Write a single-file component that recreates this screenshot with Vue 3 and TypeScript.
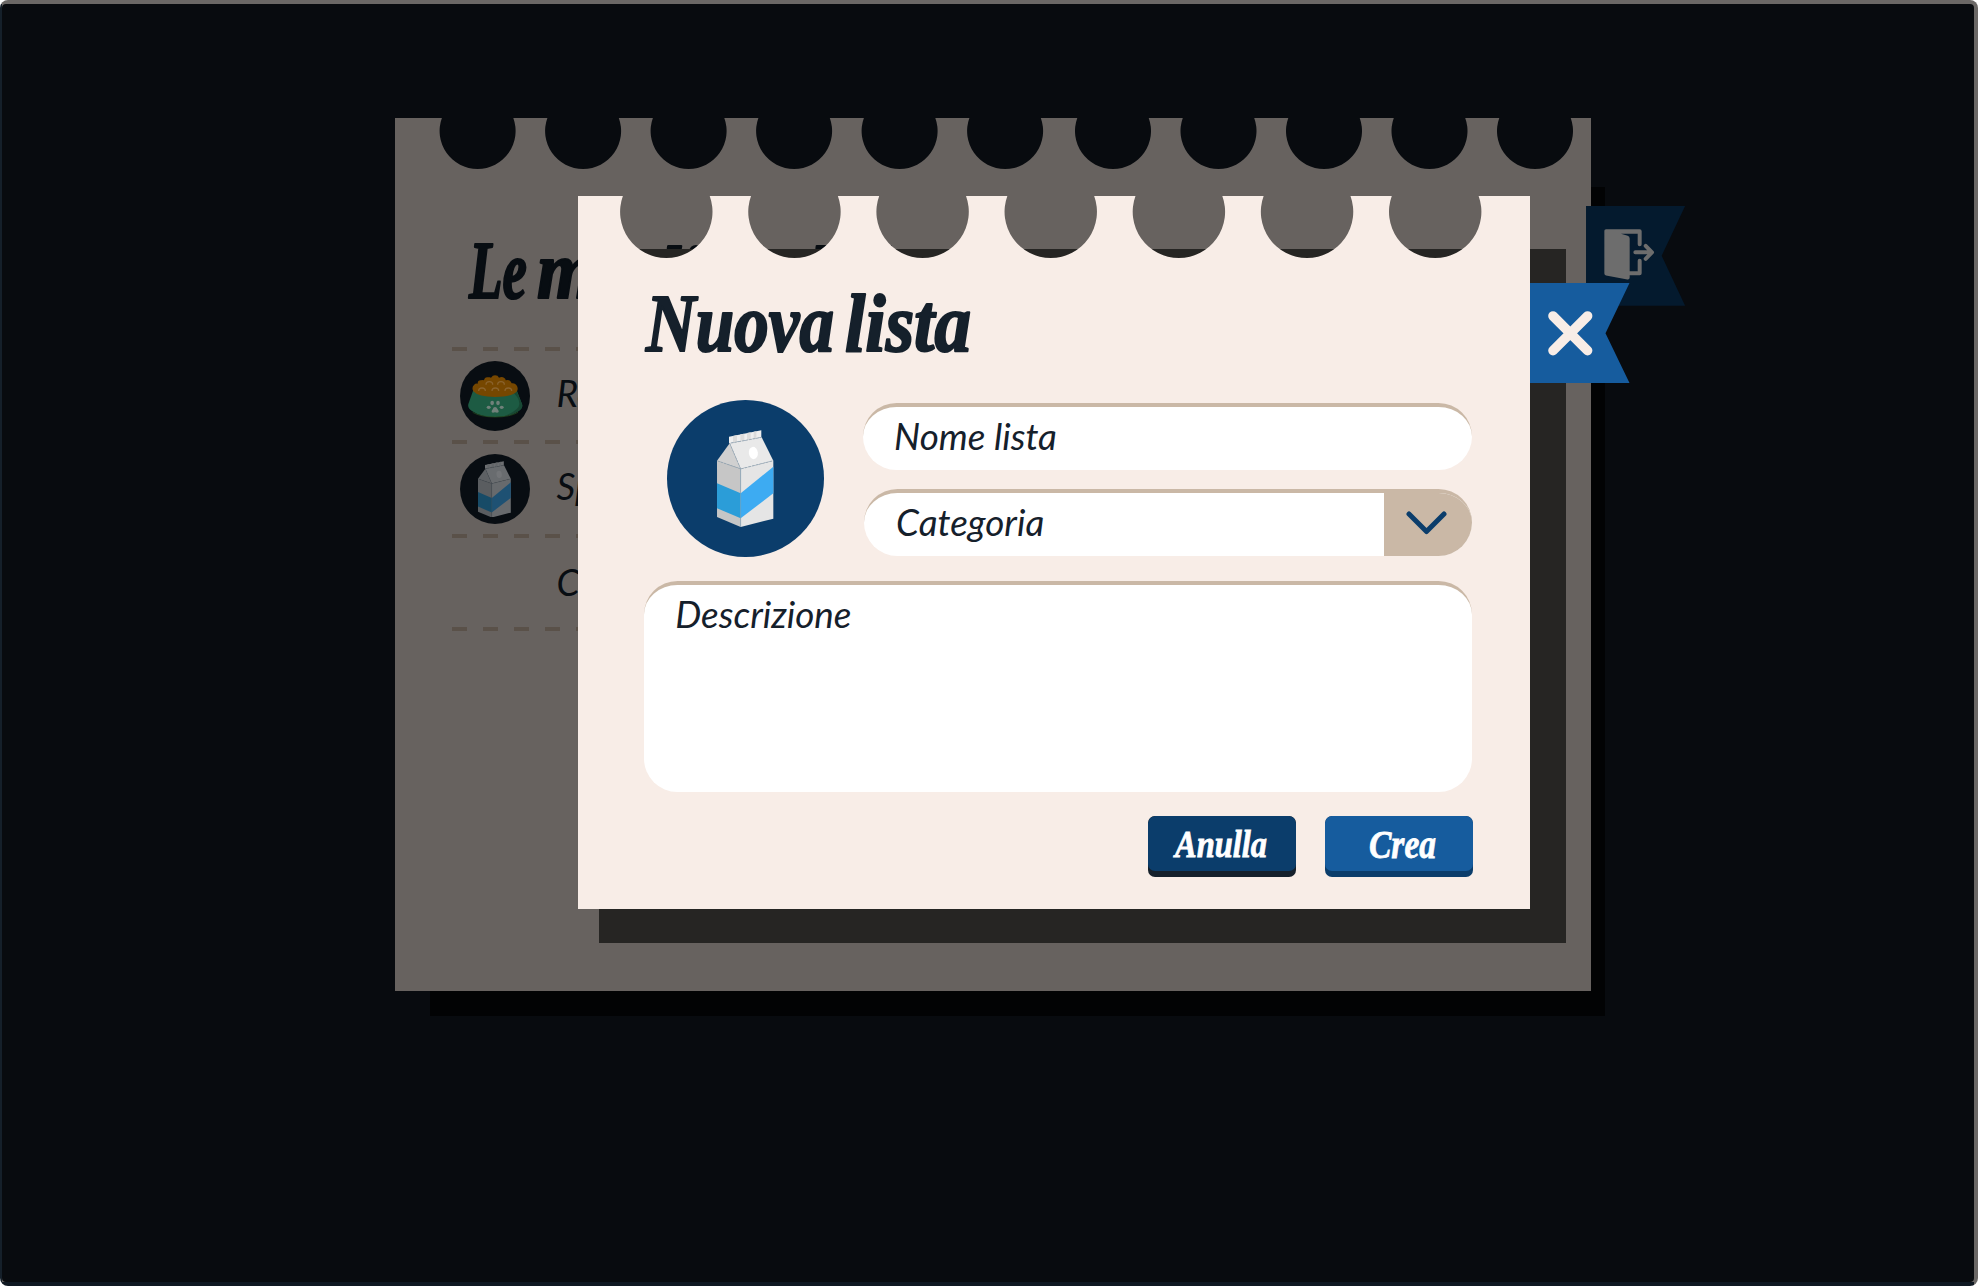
<script setup lang="ts">
interface ListRow {
  label: string
  icon: 'bowl' | 'milk' | null
}

const rows: ListRow[] = [
  { label: 'Roba per cani', icon: 'bowl' },
  { label: 'Spesa', icon: 'milk' },
  { label: 'Crea nuova', icon: null },
]

/** Outline of a sheet of paper whose top edge is bitten by round holes. */
function tornSheet(width: number, height: number, centers: number[], cy: number, r: number): string {
  const half = Math.sqrt(r * r - cy * cy)
  const bites = centers.map((c) => `H${c - half}A${r} ${r} 0 1 0 ${c + half} 0`).join('')
  return `M0 0${bites}H${width}V${height}H0Z`
}

const backHoles = Array.from({ length: 11 }, (_, i) => 82.6 + i * 105.5 + (i > 5 ? 2.4 : 0))
const backPath = tornSheet(1196.2, 873, backHoles, 13, 38)

const modalHoles = Array.from({ length: 7 }, (_, i) => 88.3 + i * 128.15)
const modalPath = tornSheet(952.7, 713.9, modalHoles, 15.8, 46.2)
</script>

<template>
  <div class="window">
    <div class="screen">
      <section class="sheet back">
        <div class="shade back-shade"></div>
        <svg class="paper" width="1196.2" height="873"><path :d="backPath" fill="#67625f" /></svg>
        <svg class="back-title" width="520" height="90">
          <text x="3" y="60" textLength="58" lengthAdjust="spacingAndGlyphs">Le</text>
          <text x="71" y="60" textLength="112" lengthAdjust="spacingAndGlyphs">mie</text>
          <text class="low" x="195" y="60" textLength="122" lengthAdjust="spacingAndGlyphs">liste</text>
          <text class="low" x="332" y="60" textLength="124" lengthAdjust="spacingAndGlyphs">della</text>
        </svg>
        <ul class="rows">
          <li v-for="row in rows" :key="row.label">
            <span class="badge" :class="{ empty: !row.icon }">
              <svg v-if="row.icon === 'bowl'" width="70" height="70" viewBox="88 93 210 210">
                <path d="M128 180L113 222Q110 234 124 243Q150 261 194 261Q238 261 264 243Q278 234 274 222L258 180Z" fill="#1d5b43" />
                <path d="M258 184L274 222Q278 234 264 243Q247 254 222 258Q266 240 266 222Q266 206 250 190Z" fill="#184834" />
                <path d="M126 247Q150 261 194 261Q238 261 262 247" fill="none" stroke="#28511f" stroke-width="2" />
                <path d="M128 184Q122 173 130 165Q134 160 141 161Q141 151 150 151Q158 149 160 151Q162 139 174 142Q179 141 181 143Q186 136 193 136Q202 136 205 143Q214 138 221 144Q225 147 225 151Q238 146 243 160Q252 158 257 165Q264 173 259 184Q244 201 193 201Q143 201 128 184Z" fill="#764700" />
                <g fill="none" stroke="#8a632d" stroke-width="4">
                  <path d="M166 164a10 9 0 0 1 20 0M201 164a10 9 0 0 1 20 0M144 183a10 9 0 0 1 20 0M184 183a10 9 0 0 1 20 0M223 183a10 9 0 0 1 20 0" />
                </g>
                <g fill="#70817a">
                  <ellipse cx="184.500" cy="219" rx="5.500" ry="6.500" />
                  <ellipse cx="202" cy="219" rx="5.500" ry="6.500" />
                  <ellipse cx="174" cy="232" rx="6" ry="5" />
                  <ellipse cx="213" cy="232" rx="6" ry="5" />
                  <path d="M193 231Q198 231 201 238Q205 243 204 246Q201 250 193 247Q185 250 183 246Q182 243 186 238Q188 231 193 231Z" />
                </g>
              </svg>
              <svg v-if="row.icon === 'milk'" class="dim" width="33" height="56.7" viewBox="0 0 170 292">
                <use href="#milk" />
              </svg>
            </span>
            <span class="label">{{ row.label }}</span>
          </li>
        </ul>
        <svg class="exit" width="99.2" height="99.8" viewBox="17 17.500 297.500 299.500">
          <path d="M17 17.500H314.500L244 167L314.500 317H17Z" fill="#041a2e" />
          <path d="M72 92Q72 87 77 87H178Q184 87 184 93V132A6 6 0 0 1 172 132V101H122L142 107Q148 109 148 115V213H172V182A6 6 0 0 1 184 182V219Q184 225 178 225H148V232Q148 239 141 238L77 226Q72 225 72 220Z" fill="#6d6d6d" />
          <path d="M165 156.500H212M196 137L215 156.500L196 176" fill="none" stroke="#6d6d6d" stroke-width="12" stroke-linecap="round" stroke-linejoin="round" />
        </svg>
      </section>

      <section class="sheet modal">
        <div class="shade modal-shade"></div>
        <svg class="paper" width="952.7" height="713.9"><path :d="modalPath" fill="#f8ede7" /></svg>
        <svg class="title" width="360" height="90">
          <text x="2" y="66" textLength="188" lengthAdjust="spacingAndGlyphs">Nuova</text>
          <text x="201" y="66" textLength="126" lengthAdjust="spacingAndGlyphs">lista</text>
        </svg>
        <form class="form" @submit.prevent>
          <div class="top">
            <div class="avatar">
              <svg width="56.7" height="97.3" viewBox="0 0 170 292">
                <g id="milk">
                  <path d="M0 92L71 116V291L0 261Z" fill="#c6c6c6" />
                  <path d="M71 116L169 92V266L71 291Z" fill="#e5e5e5" />
                  <path d="M0 92L38 40L71 116Z" fill="#d0d0d0" />
                  <path d="M38 40L134 22L169 92L71 116Z" fill="#e9e9e9" />
                  <path d="M36 20L133 1V22L36 40Z" fill="#efefef" />
                  <path d="M48 18L60 15V35L48 38ZM70 13L82 11V31L70 33ZM90 9L101 7V28L90 30ZM110 5L118 4V25L110 26Z" fill="#dcdcdc" />
                  <path d="M0 160L71 190V265L0 235Z" fill="#2b9dd8" />
                  <path d="M71 190L169 110V190L71 265Z" fill="#3dabf2" />
                  <path d="M0 92L71 117L169 92M71 117L38 40L134 22" fill="none" stroke="#9aa8b3" stroke-width="2.500" stroke-dasharray="8 3" />
                  <path d="M71 117V291" stroke="#7f9fb5" stroke-opacity=".6" stroke-width="2" />
                  <ellipse cx="109" cy="69" rx="13.500" ry="18.500" transform="rotate(-8 109 69)" fill="#fff" />
                </g>
              </svg>
            </div>
            <div class="fields">
              <div class="field name">Nome lista</div>
              <div class="field category">
                <span>Categoria</span>
                <span class="drop">
                  <svg width="41" height="24" viewBox="0 0 41 24">
                    <path d="M3 3L20.500 20.500L38 3" fill="none" stroke="#0b3d6b" stroke-width="5" stroke-linecap="round" stroke-linejoin="round" />
                  </svg>
                </span>
              </div>
            </div>
          </div>
          <div class="field description">Descrizione</div>
          <div class="actions">
            <button class="btn cancel" type="button">
              <svg width="148" height="54">
                <text x="27" y="41" font-size="37" textLength="92" lengthAdjust="spacingAndGlyphs">Anulla</text>
              </svg>
            </button>
            <button class="btn create" type="submit">
              <svg width="148" height="54">
                <text x="44" y="41.500" font-size="41" textLength="67" lengthAdjust="spacingAndGlyphs">Crea</text>
              </svg>
            </button>
          </div>
        </form>
        <svg class="close" width="99.500" height="100" viewBox="0 0 99.500 100">
          <path d="M0 0H99.500L75.500 50.300L99.500 100H0Z" fill="#165c9e" />
          <path d="M23 33L57.600 67.600M57.600 33L23 67.600" stroke="#f8ede7" stroke-width="9.600" stroke-linecap="round" />
        </svg>
      </section>
    </div>
  </div>
</template>

<style>
body {
  background: #fff;
  overflow: hidden;
}
</style>

<style scoped>
.window {
  box-sizing: border-box;
  width: 1978px;
  height: 1286px;
  padding: 4px 4px 4px 2px;
  border-radius: 8px;
  overflow: hidden;
  background: linear-gradient(to right, #15202a 2px, transparent 2px) 0 4px no-repeat,
    linear-gradient(#0f1822, #0f1822) 0 1282px / 1974px 4px no-repeat, #6b6866;
}
.screen {
  position: relative;
  height: 1278px;
  background: #080b0f;
  border-radius: 4px;
}
.sheet {
  position: absolute;
  box-sizing: border-box;
}
.back {
  left: 392.600px;
  top: 114px;
  width: 1196.2px;
  height: 873px;
  padding: 63px 0 0 57px;
}
.modal {
  left: 575.500px;
  top: 191.600px;
  width: 952.7px;
  height: 713.9px;
  padding: 89.700px 57.800px 0 66.700px;
}
.paper {
  position: absolute;
  left: 0;
  top: 0;
  z-index: 0;
}
.shade {
  position: absolute;
}
.back-shade {
  left: 35.300px;
  top: 69px;
  width: 1175px;
  height: 829.300px;
  background: #020304;
}
.modal-shade {
  left: 21.200px;
  top: 53.700px;
  width: 967.500px;
  height: 693.400px;
  background: #262523;
}
.title,
.back-title {
  display: block;
  position: relative;
  overflow: visible;
}
.title text,
.back-title text,
.btn text {
  font-family: 'Liberation Serif', serif;
  font-style: italic;
  font-weight: bold;
}
.title text,
.back-title text {
  font-size: 82px;
  stroke-width: 2.200px;
  stroke-linejoin: round;
}
.back-title .low {
  font-size: 75px;
}
.title {
  fill: #15202b;
  stroke: #15202b;
}
.back-title {
  fill: #080d12;
  stroke: #080d12;
  margin: 57px 0 0 14px;
}
.rows {
  position: relative;
  list-style: none;
  margin: 19px 60px 0 0;
  padding: 0 0 4px;
  font: italic 37px Lato, sans-serif;
  color: #080d12;
  background:
    repeating-linear-gradient(90deg, #5a5149 0 15.500px, transparent 15.500px 31px) 0 0 / 100% 4px no-repeat,
    repeating-linear-gradient(90deg, #5a5149 0 15.500px, transparent 15.500px 31px) 0 93.300px / 100% 4px no-repeat,
    repeating-linear-gradient(90deg, #5a5149 0 15.500px, transparent 15.500px 31px) 0 186.600px / 100% 4px no-repeat,
    repeating-linear-gradient(90deg, #5a5149 0 15.500px, transparent 15.500px 31px) 0 279.900px / 100% 4px no-repeat;
}
.rows li {
  display: flex;
  align-items: center;
  gap: 27px;
  height: 93.300px;
  padding: 4px 0 0 8px;
  box-sizing: border-box;
}
.label {
  padding-bottom: 7px;
}
.rows li:last-child .label {
  padding-bottom: 2px;
}
.badge {
  display: flex;
  align-items: center;
  justify-content: center;
  width: 70px;
  height: 70px;
  border-radius: 50%;
  background: #080d12;
}
.badge.empty {
  background: none;
}
.dim {
  opacity: 0.43;
}
.exit {
  position: absolute;
  left: 1191.300px;
  top: 88px;
}
.close {
  position: absolute;
  left: 952.700px;
  top: 87.700px;
}
.form {
  position: relative;
  margin-top: 30.400px;
}
.top {
  display: flex;
  justify-content: space-between;
  align-items: flex-start;
  padding-left: 23px;
}
.avatar {
  display: flex;
  align-items: center;
  justify-content: center;
  width: 156.500px;
  height: 156.500px;
  margin-top: -5.400px;
  border-radius: 50%;
  background: #0b3d6b;
}
.fields {
  display: flex;
  flex-direction: column;
  align-items: flex-end;
  gap: 19.500px;
  margin-top: -3px;
}
.field {
  box-sizing: border-box;
  border-top: 4px solid #cab8a6;
  border-radius: 33.500px;
  background: #fff;
  color: #15202b;
  font: italic 36.800px/44px Lato, sans-serif;
}
.name {
  width: 609.300px;
  height: 67px;
  padding: 7px 0 0 31px;
}
.category {
  display: flex;
  justify-content: space-between;
  width: 608.300px;
  height: 67px;
  padding-left: 32px;
  overflow: hidden;
}
.category > span:first-child {
  padding-top: 7px;
}
.drop {
  display: flex;
  align-items: center;
  justify-content: center;
  box-sizing: border-box;
  width: 88px;
  padding-right: 4px;
  margin-top: -4px;
  background: #cab8a6;
}
.description {
  height: 211.300px;
  margin-top: 24px;
  padding: 7px 0 0 31px;
}
.actions {
  display: flex;
  justify-content: flex-end;
  gap: 28.800px;
  margin: 24.300px -0.600px 0 0;
}
.btn {
  display: flex;
  align-items: flex-start;
  width: 148px;
  height: 60.500px;
  padding: 0;
  border: 0;
  border-radius: 7px;
  fill: #fff;
  overflow: hidden;
}
.btn svg {
  display: block;
  height: 54.300px;
  border-radius: 7px;
}
.btn text {
  stroke: #fff;
  stroke-width: 0.800px;
}
.cancel {
  background: #15202b;
}
.cancel svg {
  background: #0b3d6b;
}
.create {
  background: #0b3d6b;
}
.create svg {
  background: #165c9e;
}
</style>
